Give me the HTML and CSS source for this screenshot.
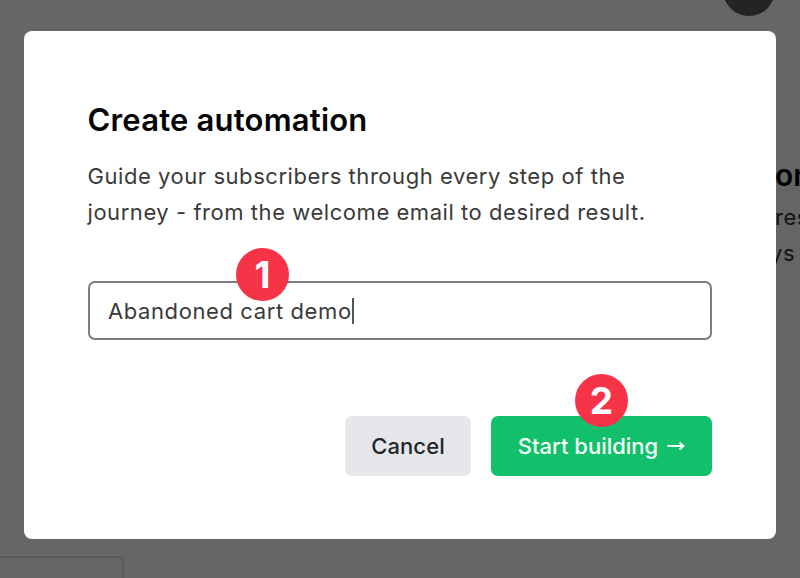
FILE: index.html
```html
<!DOCTYPE html>
<html lang="en">
<head>
    <meta charset="UTF-8">
    <meta name="viewport" content="width=device-width, initial-scale=1.0">
    <title>Create automation</title>
    <link rel="stylesheet" href="styles.css">
</head>
<body>

    <div class="page">
        <header class="topbar">
            <div class="avatar"></div>
        </header>
        <section class="band">
            <div class="teaser">
                <h2>on</h2>
                <p>res</p>
                <p class="teaser-last">ys t</p>
            </div>
        </section>
        <section class="band band-low"></section>
        <div class="outline-btn"></div>
    </div>

    <div class="overlay">
        <div class="modal">
            <h1>Create automation</h1>
            <p class="intro">Guide your subscribers through every step of the journey - from the welcome email to desired result.</p>

            <div class="field">
                <span class="field-text">Abandoned cart demo</span><span class="caret"></span>
                <span class="badge badge-one">1</span>
            </div>

            <div class="actions">
                <button class="button button-cancel">Cancel</button>
                <button class="button button-start">
                    <span>Start building</span>
                    <svg class="arrow" width="18" height="14" viewBox="0 0 18 14" fill="none" stroke="currentColor" stroke-width="2">
                        <path d="M0.5 7H16"/>
                        <path d="M12.5 3.5L16.3 7L12.5 10.5"/>
                    </svg>
                    <span class="badge badge-two">2</span>
                </button>
            </div>
        </div>
    </div>

</body>
</html>
```

FILE: styles.css
```css
* {
    box-sizing: border-box;
}

body {
    margin: 0;
    height: 578px;
    overflow: hidden;
    position: relative;
    font-family: Inter, "Liberation Sans", sans-serif;
    background-color: #fff;
    color: #333;
}

/* Page behind the dialog */
.page {
    height: 578px;
    overflow: hidden;
}

.topbar {
    height: 37px;
    display: flex;
    justify-content: flex-end;
    align-items: flex-end;
    padding-right: 25px;
    border-bottom: 1px solid #f2f2f2;
}

.avatar {
    width: 52px;
    height: 52px;
    margin-bottom: 20px;
    flex-shrink: 0;
    border-radius: 50%;
    background: #5a5a5e;
}

.band {
    height: 415px;
    padding: 118px 0 0 775px;
    background: #fcfcfc;
    border-bottom: 1px solid #f0f0f0;
}

.band-low {
    height: 66px;
    padding: 0;
    background: #fff;
    border-bottom: 1px solid #f2f2f2;
}

.teaser {
    white-space: nowrap;
    color: #333;
}

.teaser h2 {
    margin: 0 0 4px;
    font-size: 30px;
    font-weight: 600;
    line-height: 40px;
    color: #000;
}

.teaser p {
    margin: 0;
    font-size: 22px;
    letter-spacing: 0.55px;
    line-height: 36px;
}

.teaser-last {
    margin-left: -5px !important;
}

.outline-btn {
    width: 124px;
    height: 40px;
    margin-top: 38px;
    border: 2px solid #e0e0e0;
    border-left: 0;
    border-radius: 0 4px 0 0;
}

/* Dialog */
.overlay {
    position: absolute;
    top: 0;
    left: 0;
    width: 800px;
    height: 578px;
    padding: 31px 24px 39px;
    background: rgba(0, 0, 0, 0.6);
}

.modal {
    height: 508px;
    padding: 71px 64px 0;
    background: #fff;
    border-radius: 8px;
}

.modal h1 {
    margin: 0 0 0 -0.5px;
    font-size: 31px;
    font-weight: 600;
    line-height: 36px;
    letter-spacing: 0.2px;
    color: #050505;
}

.intro {
    margin: 20px 0 0 -0.5px;
    font-size: 22px;
    line-height: 36px;
    letter-spacing: 0.55px;
    color: #3a3a3a;
}

.field {
    position: relative;
    height: 59px;
    margin-top: 51px;
    padding-left: 18px;
    display: flex;
    align-items: center;
    border: 2px solid #7c7c7c;
    border-radius: 7px;
    font-size: 22px;
    letter-spacing: 0.6px;
    color: #3a3a3a;
}

.caret {
    width: 2px;
    height: 26px;
    background: #555;
}

.actions {
    display: flex;
    justify-content: flex-end;
    gap: 20px;
    margin-top: 76px;
}

.button {
    position: relative;
    height: 59.5px;
    padding: 0;
    border: none;
    border-radius: 7px;
    font-family: inherit;
    font-size: 22px;
    font-weight: 450;
    letter-spacing: 0.1px;
}

.button-cancel {
    width: 126px;
    background: #e6e7eb;
    color: #24262b;
}

.button-start {
    width: 221px;
    display: flex;
    align-items: center;
    justify-content: center;
    gap: 9px;
    background: #12bf6a;
    color: #f2fff8;
    font-weight: 500;
    letter-spacing: 0;
}

.badge {
    position: absolute;
    width: 53px;
    height: 53px;
    display: flex;
    align-items: center;
    justify-content: center;
    border-radius: 50%;
    background: #f73348;
    color: #fff;
    font-family: Inter, sans-serif;
    font-size: 37px;
    font-weight: 700;
    letter-spacing: 0;
}

.badge-one {
    top: -35px;
    left: 146px;
}

.badge-two {
    top: -42px;
    left: 84px;
}
```
